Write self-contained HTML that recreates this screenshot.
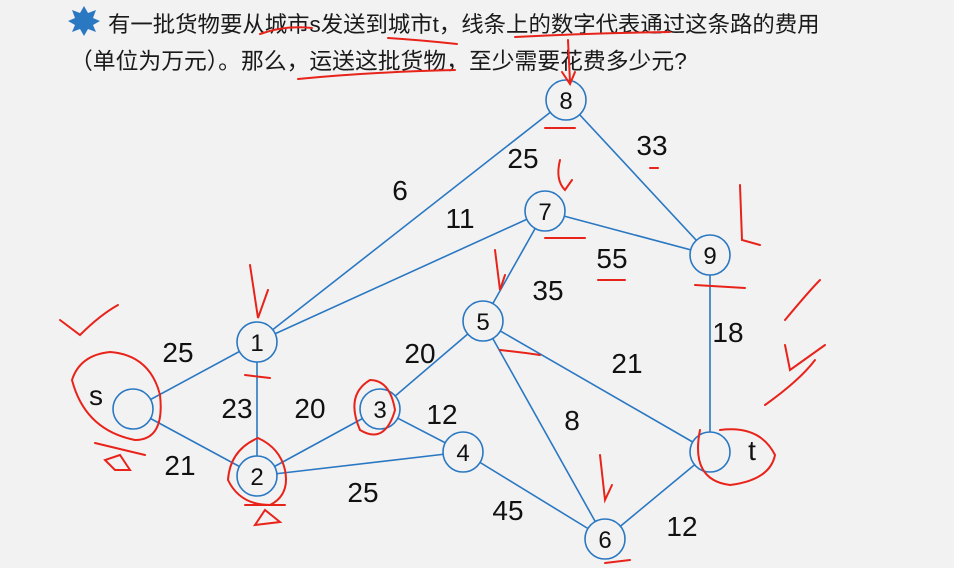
<!DOCTYPE html>
<html><head><meta charset="utf-8"><style>
body{margin:0;width:954px;height:568px;background:#f3f2f3;overflow:hidden;font-family:"Liberation Sans","Noto Sans CJK SC",sans-serif;}
.t{position:absolute;font-size:22px;color:#1a1a1a;white-space:nowrap;}
</style></head><body>
<div class="t" style="left:108px;top:7px;font-size:22.4px">有一批货物要从城市s发送到城市t，线条上的数字代表通过这条路的费用</div>
<div class="t" style="left:70px;top:43px;font-size:22.8px">（单位为万元）。那么，运送这批货物，至少需要花费多少元?</div>
<svg width="954" height="568" style="position:absolute;left:0;top:0">
<polygon points="84,6 88,13 96,10 93,18 100,21 93,25 96,32 88,29 84,36 80,29 72,32 75,25 68,21 75,18 72,10 80,13" fill="#2a78c2"/>
<g stroke="#2a78c2" stroke-width="1.6" fill="none">
<line x1="133" y1="409" x2="257" y2="342"/><line x1="133" y1="409" x2="257" y2="476"/>
<line x1="257" y1="342" x2="257" y2="476"/><line x1="257" y1="342" x2="566" y2="100"/>
<line x1="257" y1="342" x2="545" y2="211"/><line x1="257" y1="476" x2="380" y2="409"/>
<line x1="257" y1="476" x2="463" y2="452"/><line x1="380" y1="409" x2="483" y2="321"/>
<line x1="380" y1="409" x2="463" y2="452"/><line x1="463" y1="452" x2="605" y2="539"/>
<line x1="483" y1="321" x2="545" y2="211"/><line x1="483" y1="321" x2="710" y2="452"/>
<line x1="483" y1="321" x2="605" y2="539"/><line x1="545" y1="211" x2="710" y2="255"/>
<line x1="566" y1="100" x2="710" y2="255"/><line x1="710" y1="255" x2="710" y2="452"/>
<line x1="710" y1="452" x2="605" y2="539"/>
</g>
<g stroke="#2a78c2" stroke-width="1.6" fill="#f3f2f3">
<circle cx="133" cy="409" r="20"/><circle cx="257" cy="342" r="20"/><circle cx="257" cy="476" r="20"/>
<circle cx="380" cy="409" r="20"/><circle cx="463" cy="452" r="20"/><circle cx="483" cy="321" r="20"/>
<circle cx="605" cy="539" r="20"/><circle cx="545" cy="211" r="20"/><circle cx="566" cy="100" r="20"/>
<circle cx="710" cy="255" r="20"/><circle cx="710" cy="452" r="20"/>
</g>
<g font-family="Liberation Sans, sans-serif" font-size="24" fill="#111" text-anchor="middle">
<text x="257" y="351">1</text><text x="257" y="485">2</text><text x="380" y="418">3</text>
<text x="463" y="461">4</text><text x="483" y="330">5</text><text x="605" y="548">6</text>
<text x="545" y="220">7</text><text x="566" y="109">8</text><text x="710" y="264">9</text>
</g>
<g font-family="Liberation Sans, sans-serif" font-size="28" fill="#111" text-anchor="middle">
<text x="96" y="405">s</text><text x="752" y="460">t</text>
<text x="178" y="362">25</text><text x="180" y="475">21</text><text x="237" y="418">23</text>
<text x="310" y="418">20</text><text x="420" y="363">20</text><text x="442" y="424">12</text>
<text x="363" y="502">25</text><text x="400" y="200">6</text><text x="460" y="228">11</text>
<text x="523" y="168">25</text><text x="652" y="155">33</text><text x="612" y="268">55</text>
<text x="548" y="300">35</text><text x="627" y="373">21</text><text x="572" y="430">8</text>
<text x="508" y="520">45</text><text x="682" y="536">12</text><text x="728" y="342">18</text>
</g>
<g stroke="#e8231a" stroke-width="2" fill="none" stroke-linecap="round">
<path d="M260,34 Q285,25 312,28"/><path d="M388,38 Q420,40 457,44"/><path d="M515,37 Q590,33 670,32"/>
<path d="M298,79 Q370,72 455,70"/><path d="M568,40 L570,82 M562,72 L570,84 L575,72"/>
<path d="M60,320 L80,335 Q100,315 118,305"/>
<path d="M110,352 Q80,355 72,380 Q85,430 135,440 Q165,440 160,395 Q150,355 110,352"/>
<path d="M95,443 L145,455 M105,460 L115,470 L130,470 L120,455 Z"/>
<path d="M258,438 Q230,450 228,480 Q240,505 270,505 Q290,495 285,470 Q280,448 258,438"/>
<path d="M245,505 L285,505 M255,525 L265,510 L280,522 Z"/>
<path d="M245,375 L270,378"/><path d="M250,265 L258,318 L268,290"/>
<path d="M370,380 Q345,395 360,430 Q385,445 395,410 Q390,380 370,380"/>
<path d="M495,250 L500,290 L505,275"/><path d="M500,350 Q520,352 540,355"/>
<path d="M560,160 Q555,180 565,190 L572,180"/><path d="M545,238 L585,238"/>
<path d="M545,128 L575,128"/><path d="M598,280 L625,280"/><path d="M650,168 L658,168"/>
<path d="M740,185 L742,240 L760,245"/><path d="M695,285 L745,288"/>
<path d="M785,345 L790,370 L825,345 M765,405 Q800,380 815,360 M785,320 Q810,290 820,280"/>
<path d="M700,430 Q690,480 730,485 Q770,480 775,455 Q760,425 720,430"/>
<path d="M600,455 L605,500 L612,485"/><path d="M605,563 L630,560"/>
</g>
</svg>
</body></html>
